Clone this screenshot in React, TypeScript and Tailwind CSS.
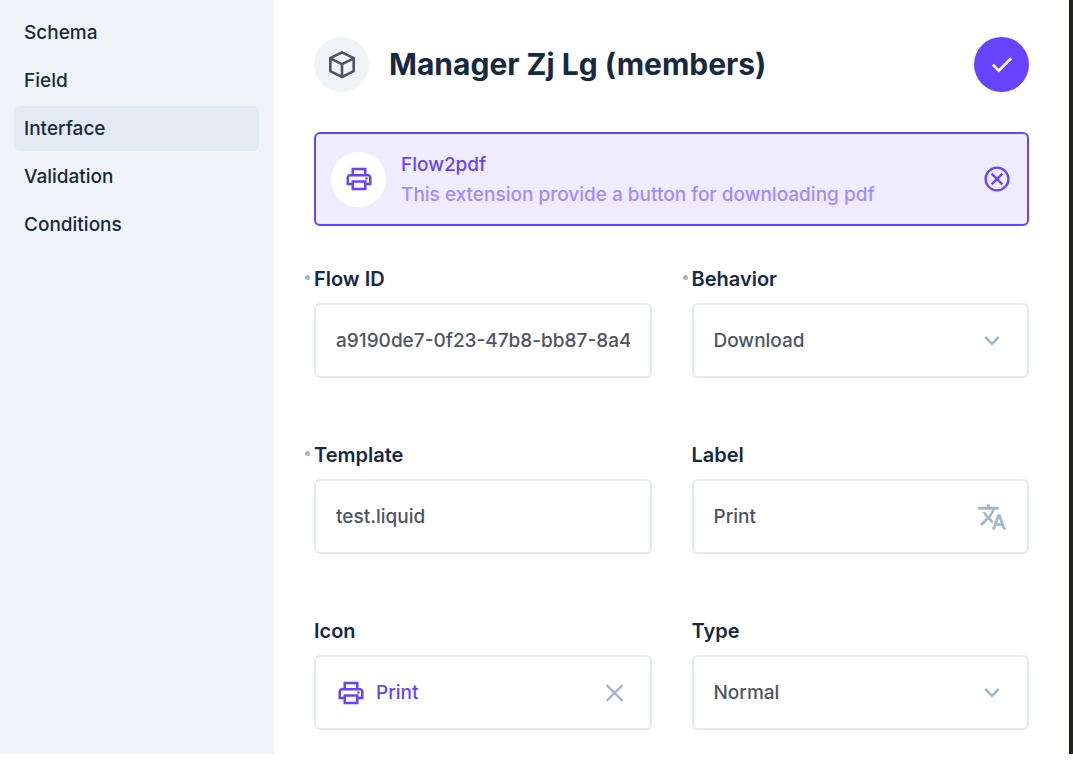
import { useId, useState } from "react";
import type { ReactNode } from "react";
import { MdOutlinePrint } from "react-icons/md";

const SECTIONS = ["Schema", "Field", "Interface", "Validation", "Conditions"];

const CONTROL =
  "w-full min-w-0 appearance-none bg-transparent text-[19px] leading-6 font-medium outline-none";

function BoxIcon() {
  return (
    <svg viewBox="0 0 26 28" className="h-7 w-[26px]" fill="none" stroke="currentColor" strokeWidth="2.6" strokeLinejoin="round" aria-hidden="true">
      <path d="M13 1.4 24.7 7.2V20.2L13 26 1.3 20.2V7.2Z" />
      <path d="M1.3 7.4 13 13.2 24.7 7.4M13 13.2V26" />
    </svg>
  );
}

function CancelIcon() {
  return (
    <svg viewBox="0 0 26 26" className="size-[26px]" fill="none" stroke="currentColor" strokeWidth="2.3" aria-hidden="true">
      <circle cx="13" cy="13" r="11.4" />
      <path d="M7.6 7.6 18.4 18.4M18.4 7.6 7.6 18.4" />
    </svg>
  );
}

function CheckIcon() {
  return (
    <svg viewBox="0 0 28 28" className="size-7" fill="none" stroke="currentColor" strokeWidth="2.7" aria-hidden="true">
      <path d="M4.8 13.6 10.8 19.6 23.2 7.2" />
    </svg>
  );
}

function ChevronIcon() {
  return (
    <svg viewBox="0 0 28 28" className="pointer-events-none absolute right-[21px] size-7 text-[#a2b5cd]" fill="none" stroke="currentColor" strokeWidth="2.6" aria-hidden="true">
      <path d="M7.4 10.2 14 16.8 20.6 10.2" />
    </svg>
  );
}

function CloseIcon() {
  return (
    <svg viewBox="0 0 30 30" className="size-[30px]" fill="none" stroke="currentColor" strokeWidth="2.4" aria-hidden="true">
      <path d="M6.6 7 22.6 23M22.6 7 6.6 23" />
    </svg>
  );
}

function TranslateIcon() {
  return (
    <svg viewBox="0 0 24 24" className="size-[30px]" fill="currentColor" stroke="currentColor" strokeWidth="0.3" aria-hidden="true">
      <path d="M12.87 15.07l-2.54-2.51.03-.03A17.52 17.52 0 0014.07 6H17V4h-7V2H8v2H1v1.99h11.17C11.5 7.92 10.44 9.75 9 11.35 8.07 10.32 7.3 9.19 6.69 8h-2c.73 1.63 1.73 3.17 2.98 4.56l-5.09 5.02L4 19l5-5 3.11 3.11.76-2.04zM18.5 10h-2L12 22h2l1.12-3h4.75L21 22h2l-4.5-12zm-2.62 7l1.62-4.33L19.12 17h-3.24z" />
    </svg>
  );
}

function Field({
  label,
  required,
  children,
}: {
  label: string;
  required?: boolean;
  children: (id: string) => ReactNode;
}) {
  const id = useId();
  return (
    <div className="flex min-w-0 flex-col gap-[10px]">
      <label htmlFor={id} className="relative text-[20px] leading-7 font-semibold text-[#172940]">
        {required && (
          <span className="absolute top-[10px] -left-[9px] size-[5px] rounded-full bg-[#a2b5cd]" />
        )}
        {label}
      </label>
      <div className="relative flex h-[75px] items-center rounded-md border-2 border-[#e4eaf1] px-5">
        {children(id)}
      </div>
    </div>
  );
}

function SelectField({
  id,
  initial,
  options,
}: {
  id: string;
  initial: string;
  options: string[];
}) {
  const [value, setValue] = useState(initial);
  return (
    <>
      <select
        id={id}
        value={value}
        onChange={(e) => setValue(e.target.value)}
        className={`${CONTROL} text-[#4f5464]`}
      >
        {options.map((option) => (
          <option key={option}>{option}</option>
        ))}
      </select>
      <ChevronIcon />
    </>
  );
}

export default function App() {
  const [section, setSection] = useState("Interface");
  const [icon, setIcon] = useState("Print");

  return (
    <div className="min-h-screen bg-white pb-2 font-['Inter',sans-serif]">
      <div className="flex border-r-4 border-[#23261f]">
        <nav className="w-[274px] shrink-0 bg-[#f0f4f9] pt-[10px] pr-[15px] pl-[14px]">
          <ul className="flex flex-col gap-[3px]">
            {SECTIONS.map((name) => (
              <li key={name}>
                <button
                  type="button"
                  onClick={() => setSection(name)}
                  className={`block h-[45px] w-full rounded-md px-[10px] text-left text-[19px] leading-6 font-medium text-[#172940] ${
                    name === section ? "bg-[#e3eaf2]" : ""
                  }`}
                >
                  {name}
                </button>
              </li>
            ))}
          </ul>
        </nav>

        <main className="min-w-0 grow px-10 pt-[37px] pb-6">
          <header className="flex items-center gap-5">
            <span className="flex size-[55px] shrink-0 items-center justify-center rounded-full bg-[#f0f4f9] text-[#4f5464]">
              <BoxIcon />
            </span>
            <h1 className="grow pb-[2px] text-[30px] leading-10 font-bold text-[#172940]">
              Manager Zj Lg (members)
            </h1>
            <button
              type="button"
              aria-label="Save"
              className="flex size-[55px] shrink-0 items-center justify-center rounded-full bg-[#6644ff] text-white"
            >
              <CheckIcon />
            </button>
          </header>

          <section className="mt-10 flex h-[94px] items-center rounded-md border-2 border-[#6644ff] bg-[#f0ecff] px-[15px]">
            <span className="flex size-[55px] shrink-0 items-center justify-center rounded-full bg-white text-[#6644ff]">
              <MdOutlinePrint className="size-[30px]" />
            </span>
            <div className="ml-[15px] min-w-0 grow pt-[2px] text-[19px] leading-[30px] font-medium">
              <h2 className="text-[#6644ff]">Flow2pdf</h2>
              <p className="text-[#a18bff]">This extension provide a button for downloading pdf</p>
            </div>
            <button type="button" aria-label="Deselect" className="mr-[2px] text-[#6644ff]">
              <CancelIcon />
            </button>
          </section>

          <form className="mt-[39px] grid grid-cols-2 gap-x-10 gap-y-[63px]">
            <Field label="Flow ID" required>
              {(id) => (
                <input id={id} type="text" defaultValue="a9190de7-0f23-47b8-bb87-8a4" className={`${CONTROL} text-[#4f5464]`} />
              )}
            </Field>
            <Field label="Behavior" required>
              {(id) => <SelectField id={id} initial="Download" options={["Download", "Open"]} />}
            </Field>
            <Field label="Template" required>
              {(id) => (
                <input id={id} type="text" defaultValue="test.liquid" className={`${CONTROL} text-[#4f5464]`} />
              )}
            </Field>
            <Field label="Label">
              {(id) => (
                <>
                  <input id={id} type="text" defaultValue="Print" className={`${CONTROL} text-[#4f5464]`} />
                  <button type="button" aria-label="Translate" className="shrink-0 text-[#a2b5cd]">
                    <TranslateIcon />
                  </button>
                </>
              )}
            </Field>
            <Field label="Icon">
              {(id) => (
                <>
                  <MdOutlinePrint className="mr-[10px] size-[30px] shrink-0 text-[#6644ff]" />
                  <input
                    id={id}
                    type="text"
                    value={icon}
                    onChange={(e) => setIcon(e.target.value)}
                    className={`${CONTROL} text-[#6644ff]`}
                  />
                  <button type="button" aria-label="Clear icon" onClick={() => setIcon("")} className="shrink-0 text-[#a2b5cd]">
                    <CloseIcon />
                  </button>
                </>
              )}
            </Field>
            <Field label="Type">
              {(id) => <SelectField id={id} initial="Normal" options={["Normal", "Primary"]} />}
            </Field>
          </form>
        </main>
      </div>
    </div>
  );
}
